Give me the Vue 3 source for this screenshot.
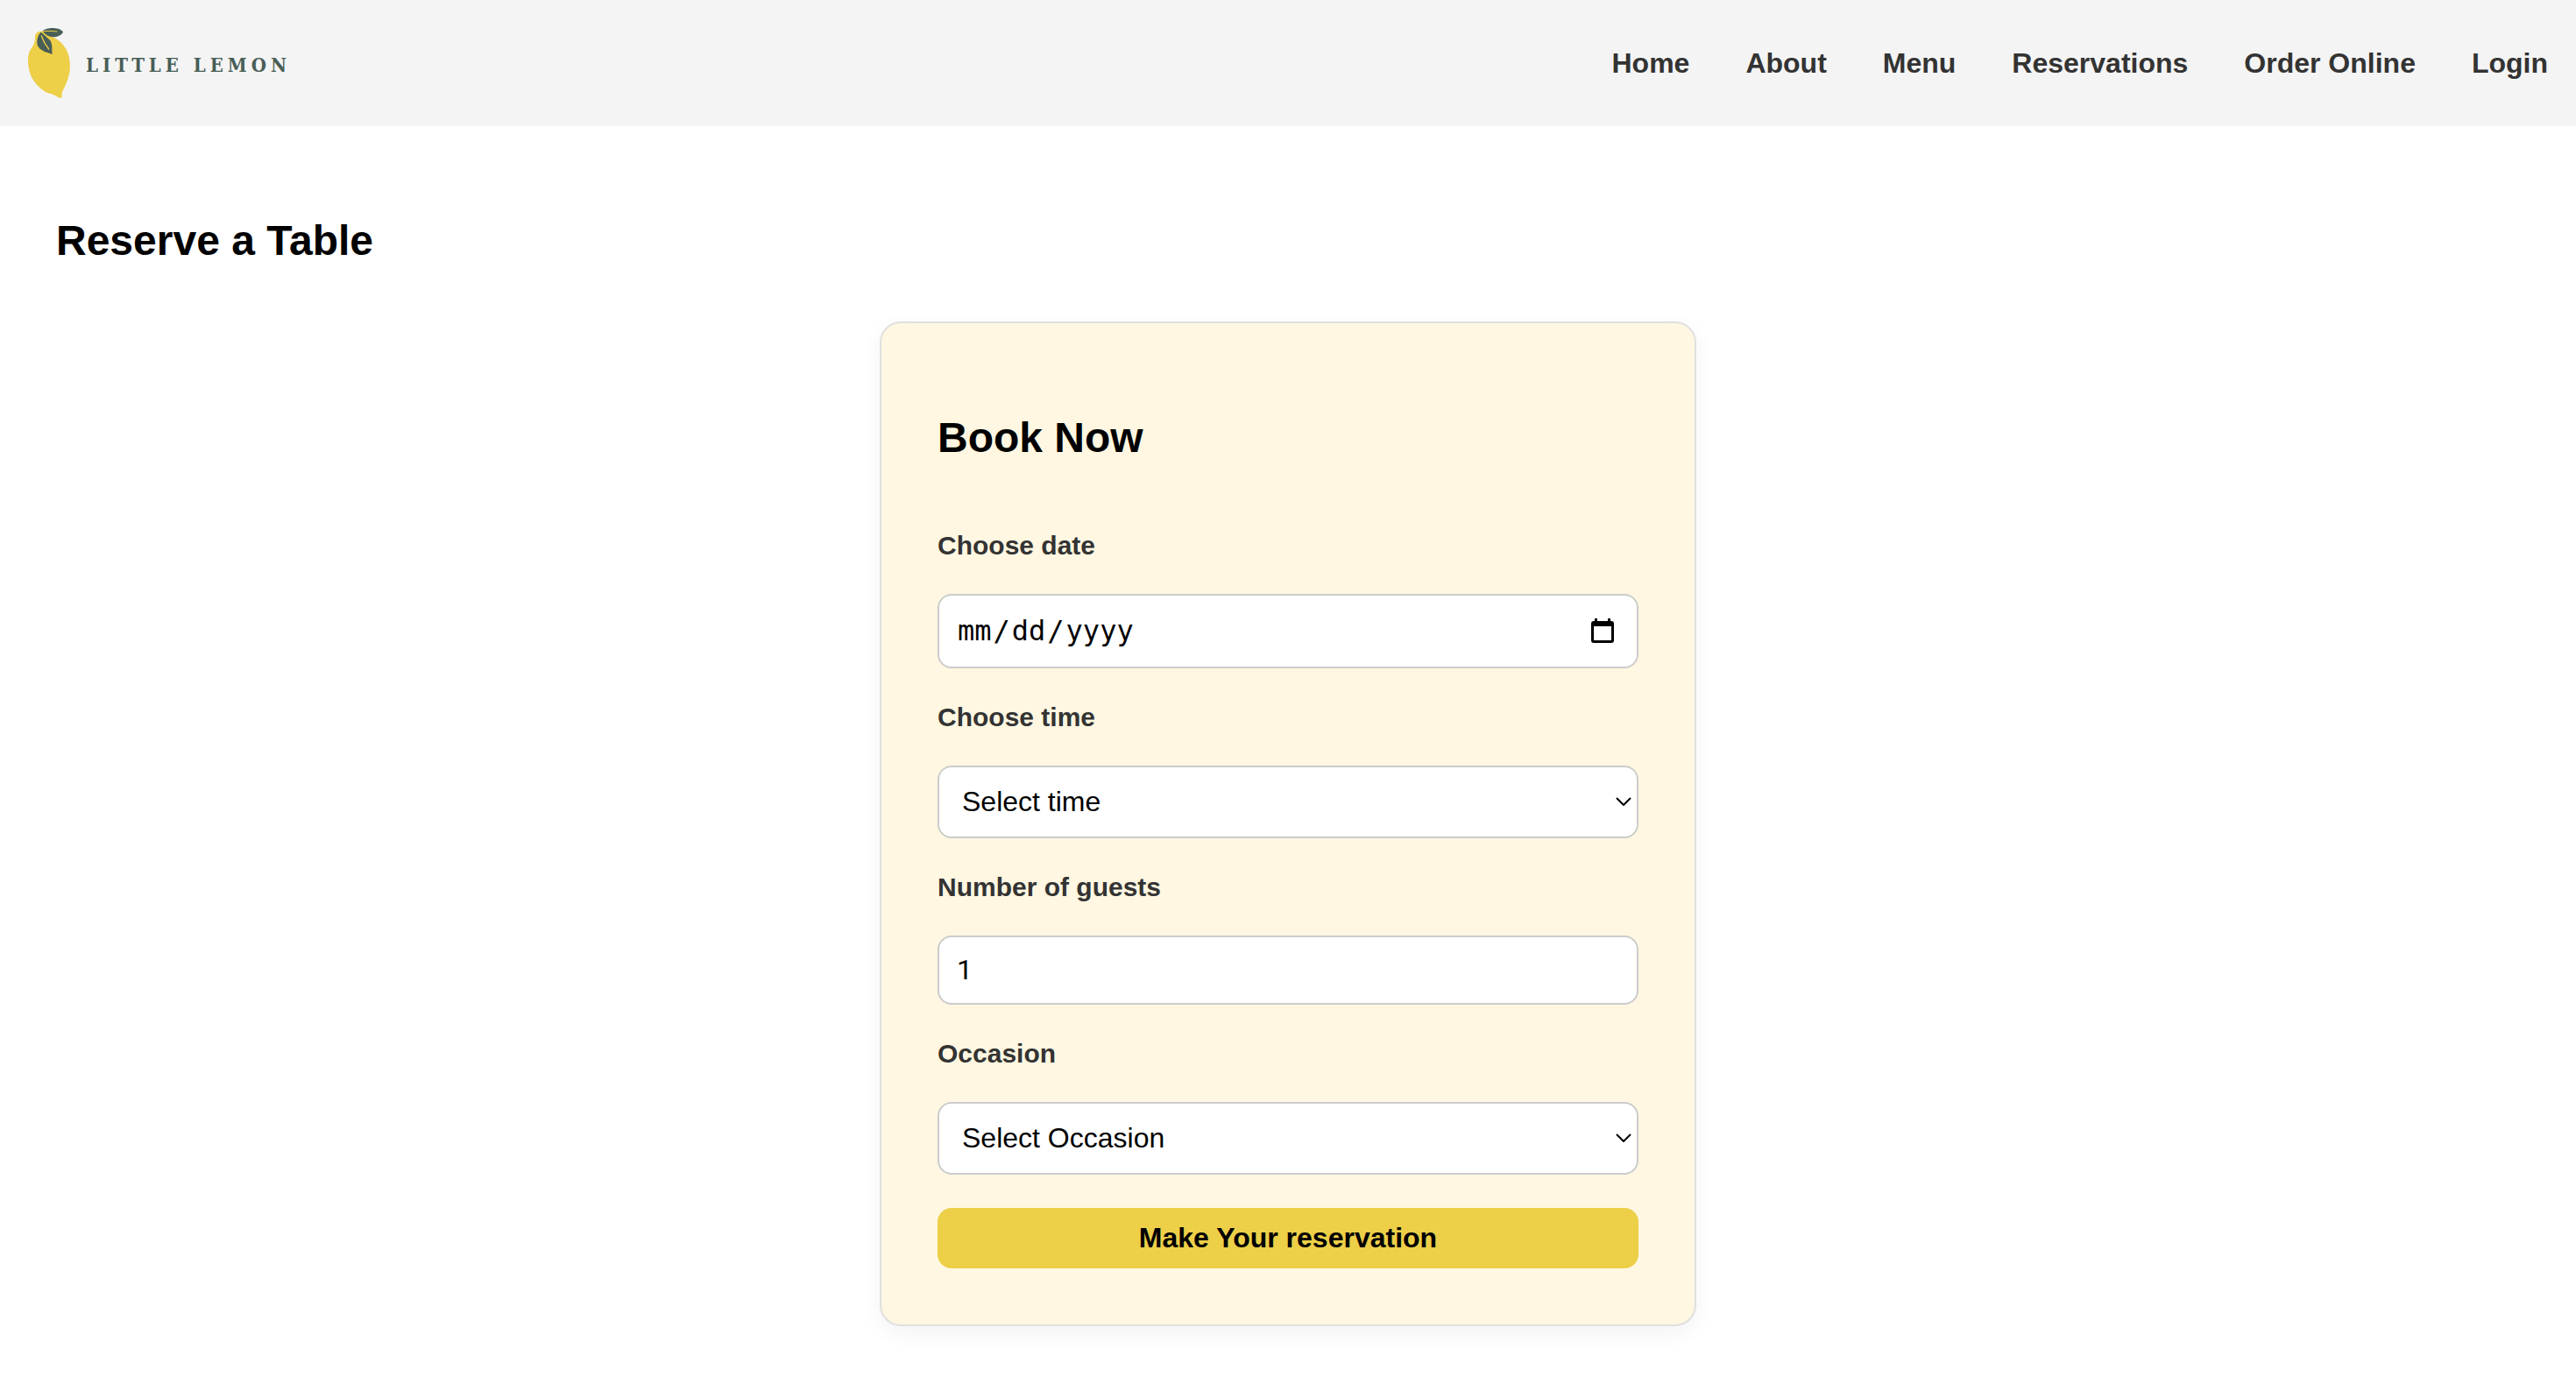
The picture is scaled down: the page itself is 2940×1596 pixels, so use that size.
<script setup>
import { ref } from 'vue'

const links = ['Home', 'About', 'Menu', 'Reservations', 'Order Online', 'Login']
const times = ['17:00', '18:00', '19:00', '20:00', '21:00', '22:00']
const occasions = ['Birthday', 'Anniversary']

const date = ref('')
const time = ref('')
const guests = ref(1)
const occasion = ref('')
</script>

<template>
  <div class="page">
    <header class="header">
      <a class="logo" href="#">
        <svg class="lemon" viewBox="96 93 144 246" aria-hidden="true">
          <path
            fill="#edcf48"
            d="M143 107 C131 107 122 112 120 123 C120 137 119 147 113 157 C105 168 97 181 96 200 C95 222 99 242 106 260 C118 284 135 302 156 315 C168 321 179 321 190 328 C197 333 203 336 210 336 C213 330 211 323 213 315 C224 294 236 268 239 240 C241 214 238 190 226 168 C215 149 200 136 181 127 C167 121 158 108 143 107Z"
          />
          <path fill="#495e57" d="M145 106 C158 97 171 95 184 96 C198 97 211 101 216 110 C210 121 197 126 182 127 C166 126 155 118 150 111Z" />
          <path fill="none" stroke="#edcf48" stroke-width="3" stroke-linecap="round" d="M147 107 Q171 105 195 108" />
          <path fill="#495e57" d="M140 110 C151 117 160 128 171 137 C181 151 177 169 179 186 C169 180 157 180 146 173 C130 164 126 153 127 140 C128 127 133 117 140 110Z" />
          <path fill="none" stroke="#edcf48" stroke-width="4" stroke-linecap="round" d="M142 123 Q151 149 167 168" />
        </svg>
        <span class="brand">LITTLE LEMON</span>
      </a>
      <nav class="nav">
        <a v-for="link in links" :key="link" href="#">{{ link }}</a>
      </nav>
    </header>

    <main class="main">
      <h1 class="title">Reserve a Table</h1>

      <form class="card" @submit.prevent>
        <h2 class="title">Book Now</h2>

        <label for="date">Choose date</label>
        <input id="date" v-model="date" class="field date" type="date" />

        <label for="time">Choose time</label>
        <div class="picker">
          <select id="time" v-model="time" class="field">
            <option value="">Select time</option>
            <option v-for="t in times" :key="t" :value="t">{{ t }}</option>
          </select>
          <svg class="chevron" viewBox="0 0 18 10" aria-hidden="true"><path d="M1 1 L9 9 L17 1" /></svg>
        </div>

        <label for="guests">Number of guests</label>
        <input id="guests" v-model="guests" class="field guests" type="number" min="1" max="10" />

        <label for="occasion">Occasion</label>
        <div class="picker">
          <select id="occasion" v-model="occasion" class="field">
            <option value="">Select Occasion</option>
            <option v-for="o in occasions" :key="o" :value="o">{{ o }}</option>
          </select>
          <svg class="chevron" viewBox="0 0 18 10" aria-hidden="true"><path d="M1 1 L9 9 L17 1" /></svg>
        </div>

        <button class="submit" type="submit">Make Your reservation</button>
      </form>
    </main>
  </div>
</template>

<style>
body {
  margin: 0;
  background: #fff;
}
</style>

<style scoped>
.page {
  font-family: "Liberation Sans", Arial, sans-serif;
  font-size: 32px;
  color: #000;
}

.header {
  display: flex;
  align-items: center;
  justify-content: space-between;
  box-sizing: border-box;
  min-height: 144px;
  padding: 0 32px;
  background: #f4f4f4;
}

.logo {
  display: flex;
  align-items: center;
  gap: 18px;
  text-decoration: none;
}

.lemon {
  display: block;
  width: 48px;
  height: 82px;
}

.brand {
  padding-top: 4px;
  font-family: "DejaVu Serif Condensed", "DejaVu Serif", serif;
  font-size: 22px;
  font-weight: 700;
  letter-spacing: 5px;
  color: #495e57;
}

.nav {
  display: flex;
  gap: 64px;
}

.nav a {
  font-weight: 700;
  color: #333;
  text-decoration: none;
}

.main {
  padding: 64px;
}

.title {
  margin: 40px 0;
  font-size: 48px;
  line-height: 54px;
}

.card {
  display: flex;
  flex-direction: column;
  gap: 38px;
  box-sizing: border-box;
  max-width: 932px;
  margin: 65px auto 0;
  padding: 64px;
  border: 2px solid #e0e0e0;
  border-radius: 24px;
  background: #fff7e1;
  box-shadow: 0 8px 24px rgba(0, 0, 0, 0.05);
}

label {
  font-size: 30px;
  font-weight: 700;
  line-height: 35px;
  color: #333;
}

.field {
  display: block;
  box-sizing: border-box;
  width: 100%;
  height: 83px;
  margin: 0;
  padding: 0 20px 2px;
  border: 2px solid #ccc;
  border-radius: 16px;
  background: #fff;
  font-family: inherit;
  font-size: 32px;
  color: #000;
}

.date {
  height: 85px;
  font-family: "DejaVu Sans Mono", monospace;
}

.date::-webkit-datetime-edit-text {
  padding: 0 1px;
}

.date::-webkit-calendar-picker-indicator {
  width: 26px;
  height: 28px;
  margin: 0;
  padding: 0 6px;
  background: url("data:image/svg+xml,%3Csvg xmlns='http://www.w3.org/2000/svg' viewBox='0 0 26 28'%3E%3Cpath fill-rule='evenodd' d='M4 0h3v3h12V0h3v3h1a3 3 0 0 1 3 3v19a3 3 0 0 1-3 3H3a3 3 0 0 1-3-3V6a3 3 0 0 1 3-3h1zM3 9v16h20V9z'/%3E%3C/svg%3E") center / 26px 28px no-repeat;
}

.guests {
  height: 79px;
  font-family: Roboto, "Liberation Sans", sans-serif;
}

.picker {
  position: relative;
}

.picker .field {
  appearance: none;
  padding: 0 26px 2px;
}

.chevron {
  position: absolute;
  top: 36px;
  right: 8px;
  width: 18px;
  height: 10px;
  fill: none;
  stroke: #000;
  stroke-width: 2;
  pointer-events: none;
}

.submit {
  height: 69px;
  padding: 0 32px;
  border: 0;
  border-radius: 16px;
  background: #edcf48;
  font-family: inherit;
  font-size: 32px;
  font-weight: 700;
  color: #000;
}
</style>
